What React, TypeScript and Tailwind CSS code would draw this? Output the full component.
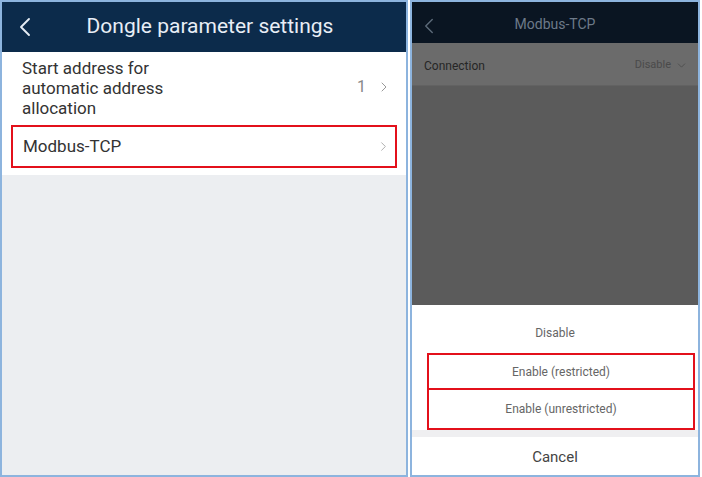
import { ChevronLeft, ChevronRight, ChevronDown } from "lucide-react";

const font = { fontFamily: "Roboto, 'Noto Sans', sans-serif" };

function DongleSettings() {
  return (
    <div className="w-[408px] h-[477px] border-2 border-[#8db4de] bg-[#eceef1] flex flex-col">
      <div className="h-[50px] bg-[#0c2b4b] flex items-center relative">
        <ChevronLeft className="absolute left-[7px] w-[32px] h-[32px] text-[#e6edf5]" strokeWidth={1.4} />
        <div className="flex-1 text-center text-[21px] text-[#e8eef6] pl-[12px]">Dongle parameter settings</div>
      </div>
      <div className="bg-white h-[70px] flex items-center pl-[20px] pr-[14px]">
        <div className="flex-1 text-[17px] leading-[20px] text-[#333] pt-[2px]">
          Start address for
          <br />
          automatic address
          <br />
          allocation
        </div>
        <span className="text-[16px] text-[#888] mr-[10px]">1</span>
        <ChevronRight className="w-[16px] h-[16px] text-[#999]" strokeWidth={1.5} />
      </div>
      <div className="bg-white h-[53px] pt-[3px] px-[9px]">
        <div className="h-[43px] border-2 border-[#e3101b] flex items-center pl-[10px] pr-[4px]">
          <div className="flex-1 text-[17px] text-[#333]">Modbus-TCP</div>
          <ChevronRight className="w-[15px] h-[15px] text-[#aaa]" strokeWidth={1.5} />
        </div>
      </div>
    </div>
  );
}

function ModbusSheet() {
  return (
    <div className="w-[290px] h-[477px] border-2 border-[#8db4de] flex flex-col bg-[#5b5b5b]">
      <div className="h-[41px] bg-[#0a1522] flex items-center relative pt-[4px]">
        <ChevronLeft className="absolute left-[4px] top-[11px] w-[26px] h-[26px] text-[#5d6b7a]" strokeWidth={1.3} />
        <div className="flex-1 text-center text-[14px] text-[#6d7a89]">Modbus-TCP</div>
      </div>
      <div className="h-[43px] bg-[#6b6b6b] flex items-center pl-[12px] pr-[10px] pt-[3px] border-b border-[#626262]">
        <div className="flex-1 text-[12px] text-[#262626]">Connection</div>
        <span className="text-[11px] text-[#4a4a4a] mr-[4px]">Disable</span>
        <ChevronDown className="w-[13px] h-[13px] text-[#4a4a4a]" strokeWidth={1.5} />
      </div>
      <div className="flex-1" />
      <div className="bg-white flex flex-col">
        <div className="h-[48px] flex items-center justify-center pt-[8px] text-[12px] text-[#666]">Disable</div>
        <div className="pl-[15px] pr-[3px]">
          <div className="h-[37px] border-2 border-[#e3101b] flex items-center justify-center text-[12px] text-[#666]">
            Enable (restricted)
          </div>
          <div className="h-[40px] border-2 border-t-0 border-[#e3101b] flex items-center justify-center text-[12px] text-[#666]">
            Enable (unrestricted)
          </div>
        </div>
        <div className="h-[7px] bg-[#efeff1]" />
        <div className="h-[38px] flex items-center justify-center pt-[2px] text-[15px] text-[#444]">Cancel</div>
      </div>
    </div>
  );
}

export default function App() {
  return (
    <div className="w-[702px] h-[477px] bg-white flex gap-[2px] overflow-hidden" style={font}>
      <DongleSettings />
      <ModbusSheet />
    </div>
  );
}
